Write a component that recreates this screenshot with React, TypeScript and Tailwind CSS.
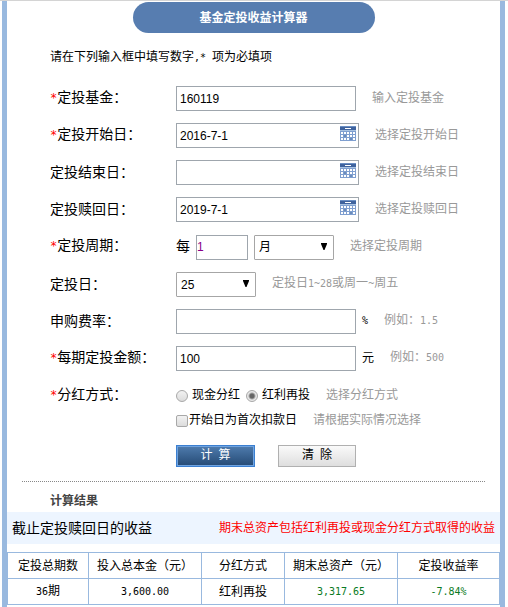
import type { ReactNode } from "react";

const inputStyle =
  "h-[25px] rounded-none border border-[#9fa6ad] bg-white px-[3px] font-['Liberation_Sans',sans-serif] text-[12px] text-black outline-none";
const mono = "font-['DejaVu_Sans_Mono',monospace] text-[10px]";

function Num({ children }: { children: ReactNode }) {
  return <span className={mono}>{children}</span>;
}

function Hint({ children }: { children: ReactNode }) {
  return <span className="ml-4 pb-1 whitespace-nowrap text-[#999]">{children}</span>;
}

type RowProps = {
  label: string;
  htmlFor?: string;
  required?: boolean;
  className?: string;
  children: ReactNode;
};

function Row({ label, htmlFor, required, className = "h-[25px]", children }: RowProps) {
  return (
    <div className={`flex items-center ${className}`}>
      <label htmlFor={htmlFor} className="w-[126px] shrink-0 pb-1 text-[14px]">
        {required && (
          <span className="font-['DejaVu_Sans_Mono',monospace] text-[12px] text-[#f00]">*</span>
        )}
        {label}
      </label>
      {children}
    </div>
  );
}

function CalendarIcon() {
  return (
    <svg width="16" height="15" viewBox="0 0 16 15" shapeRendering="crispEdges" aria-hidden="true">
      <rect width="16" height="15" fill="#7f9fd0" />
      <rect width="16" height="4" fill="#3f639e" />
      <rect width="16" height="1" fill="#6b8fc4" />
      <rect y="4" width="16" height="1" fill="#a9c3e2" />
      <rect x="5" y="2" width="6" height="1" fill="#fff" />
      {[6, 9, 12].map((y) =>
        [1, 4, 7, 10, 13].map((x) => (
          <rect
            key={`${x}-${y}`}
            x={x}
            y={y}
            width="2"
            height="2"
            fill={(x === 4 && y === 9) || (x === 10 && y === 12) ? "#6b8cbb" : "#fff"}
          />
        ))
      )}
    </svg>
  );
}

function DateField({ id, value, name }: { id: string; value: string; name: string }) {
  return (
    <div className="relative h-[25px] w-[183px]">
      <input id={id} type="text" defaultValue={value} className={`${inputStyle} w-full`} />
      <button type="button" aria-label={name} className="absolute right-[3px] top-[3px]">
        <CalendarIcon />
      </button>
    </div>
  );
}

function Select({ id, name, options }: { id: string; name?: string; options: string[] }) {
  return (
    <div className="relative h-[25px] w-20">
      <select
        id={id}
        aria-label={name}
        className="h-[25px] w-full appearance-none rounded-[1px] border border-[#a6a6a6] bg-white px-1 font-['Liberation_Sans','Noto_Sans_CJK_SC',sans-serif] text-[12px] text-black"
      >
        {options.map((o) => (
          <option key={o}>{o}</option>
        ))}
      </select>
      <svg
        width="6"
        height="7"
        viewBox="0 0 6 7"
        className="pointer-events-none absolute right-[7px] top-[8px]"
        aria-hidden="true"
      >
        <path d="M0 0h6v1L3.5 7h-1L0 1z" fill="#000" />
      </svg>
    </div>
  );
}

function Radio({ id, label, checked }: { id: string; label: string; checked?: boolean }) {
  return (
    <>
      <input
        id={id}
        type="radio"
        name="bonus"
        defaultChecked={checked}
        className="size-3 shrink-0 appearance-none rounded-full border border-[#a8a8a8] bg-linear-to-b from-[#f2f2f2] to-[#dcdcdc] checked:bg-[radial-gradient(circle,#666_0_2px,#e8e8e8_4px)]"
      />
      <label htmlFor={id} className="ml-1 pb-1">
        {label}
      </label>
    </>
  );
}

const columns = [
  { title: "定投总期数", width: "w-[81px]" },
  { title: "投入总本金（元）", width: "w-[113px]" },
  { title: "分红方式", width: "w-[83px]" },
  { title: "期末总资产（元）", width: "w-[113px]" },
  { title: "定投收益率", width: "" },
];

export default function App() {
  return (
    <div className="min-h-screen border-t border-[#d4d4d4] bg-white font-['Noto_Sans_CJK_SC',sans-serif] text-[12px] leading-4 text-black">
      <main className="ml-[2px] mr-[3px] min-h-[calc(100vh-1px)] border-x-5 border-[#99b9df] pt-px">
        <h1 className="mx-auto flex h-[31px] w-[242px] items-center justify-center rounded-full bg-[#577db0] pb-0.5 font-bold text-white">
          基金定投收益计算器
        </h1>

        <form className="pl-[43px]" onSubmit={(e) => e.preventDefault()}>
          <p className="mt-[15px]">
            请在下列输入框中填写数字<Num>,* </Num>项为必填项
          </p>

          <div className="mt-5 flex flex-col gap-3">
            <Row label="定投基金：" htmlFor="fund" required>
              <input id="fund" type="text" defaultValue="160119" className={`${inputStyle} w-[180px]`} />
              <Hint>输入定投基金</Hint>
            </Row>
            <Row label="定投开始日：" htmlFor="start" required>
              <DateField id="start" value="2016-7-1" name="选择定投开始日" />
              <Hint>选择定投开始日</Hint>
            </Row>
            <Row label="定投结束日：" htmlFor="end">
              <DateField id="end" value="" name="选择定投结束日" />
              <Hint>选择定投结束日</Hint>
            </Row>
            <Row label="定投赎回日：" htmlFor="redeem">
              <DateField id="redeem" value="2019-7-1" name="选择定投赎回日" />
              <Hint>选择定投赎回日</Hint>
            </Row>
            <Row label="定投周期：" htmlFor="period" required className="h-[26px]">
              <span className="pb-1 text-[14px]">每</span>
              <input
                id="period"
                type="text"
                defaultValue="1"
                className="ml-1.5 mr-1.5 h-[25px] w-[52px] border border-[#9fa6ad] px-0 font-['Liberation_Sans',sans-serif] text-[12px] text-[#808]"
              />
              <Select id="unit" name="周期单位" options={["月", "周"]} />
              <Hint>选择定投周期</Hint>
            </Row>
            <Row label="定投日：" htmlFor="day">
              <Select id="day" options={["25", "26", "27", "28"]} />
              <Hint>
                定投日<Num>1~28</Num>或周一<Num>~</Num>周五
              </Hint>
            </Row>
            <Row label="申购费率：" htmlFor="rate">
              <input id="rate" type="text" className={`${inputStyle} w-[180px]`} />
              <span className="ml-1.5 pb-1">
                <Num>%</Num>
              </span>
              <Hint>
                例如：<Num>1.5</Num>
              </Hint>
            </Row>
            <Row label="每期定投金额：" htmlFor="amount" required>
              <input id="amount" type="text" defaultValue="100" className={`${inputStyle} w-[180px]`} />
              <span className="ml-1.5 pb-1">元</span>
              <Hint>
                例如：<Num>500</Num>
              </Hint>
            </Row>
            <div>
              <Row label="分红方式：" htmlFor="cash" required>
                <Radio id="cash" label="现金分红" />
                <span className="w-1.5" />
                <Radio id="reinvest" label="红利再投" checked />
                <Hint>选择分红方式</Hint>
              </Row>
              <div className="flex h-[25px] items-center pl-[126px]">
                <input
                  id="first"
                  type="checkbox"
                  className="size-3 shrink-0 appearance-none rounded-[2px] border border-[#a8a8a8] bg-linear-to-b from-[#f2f2f2] to-[#dcdcdc] checked:bg-[#888]"
                />
                <label htmlFor="first" className="ml-px pb-1">
                  开始日为首次扣款日
                </label>
                <Hint>请根据实际情况选择</Hint>
              </div>
            </div>
            <div className="flex items-center gap-[23px] pl-[126px]">
              <button
                type="submit"
                className="h-[22px] w-[79px] border border-[#3b7fd0] bg-linear-to-b from-[#4f7cae] to-[#254a75] pb-0.5 leading-4 text-white ring-1 ring-inset ring-[#6fa3e0]"
              >
                计<Num> </Num>算
              </button>
              <button
                type="reset"
                className="h-[22px] w-[78px] border border-[#b0b0b0] bg-linear-to-b from-[#fafafa] to-[#dedede] pb-0.5 leading-4"
              >
                清<Num> </Num>除
              </button>
            </div>
          </div>
        </form>

        <section className="mt-[14px]">
          <div className="mx-[15px] border-t border-dotted border-[#888]" />
          <h2 className="mt-2 pl-[43px] font-bold leading-5 text-[#444]">计算结果</h2>
          <div className="mt-0.5 flex h-8 items-center justify-between bg-[#edf5ff] px-[5px] whitespace-nowrap">
            <h3 className="pb-0.5 text-[14px]">截止定投赎回日的收益</h3>
            <p className="pb-0.5 text-[#f00]">期末总资产包括红利再投或现金分红方式取得的收益</p>
          </div>
          <table className="mt-2 w-full table-fixed border-collapse text-center">
            <thead>
              <tr className="h-[26px]">
                {columns.map((c) => (
                  <th
                    key={c.title}
                    className={`border border-[#99b9df] p-0 pb-0.5 font-normal whitespace-nowrap ${c.width}`}
                  >
                    {c.title}
                  </th>
                ))}
              </tr>
            </thead>
            <tbody>
              <tr className="h-[26px] [&>td]:border [&>td]:border-[#99b9df] [&>td]:p-0 [&>td]:pb-0.5">
                <td>
                  <Num>36</Num>期
                </td>
                <td>
                  <Num>3,600.00</Num>
                </td>
                <td>红利再投</td>
                <td className="text-[#0a7a22]">
                  <Num>3,317.65</Num>
                </td>
                <td className="text-[#0a7a22]">
                  <Num>-7.84%</Num>
                </td>
              </tr>
            </tbody>
          </table>
        </section>
      </main>
    </div>
  );
}
